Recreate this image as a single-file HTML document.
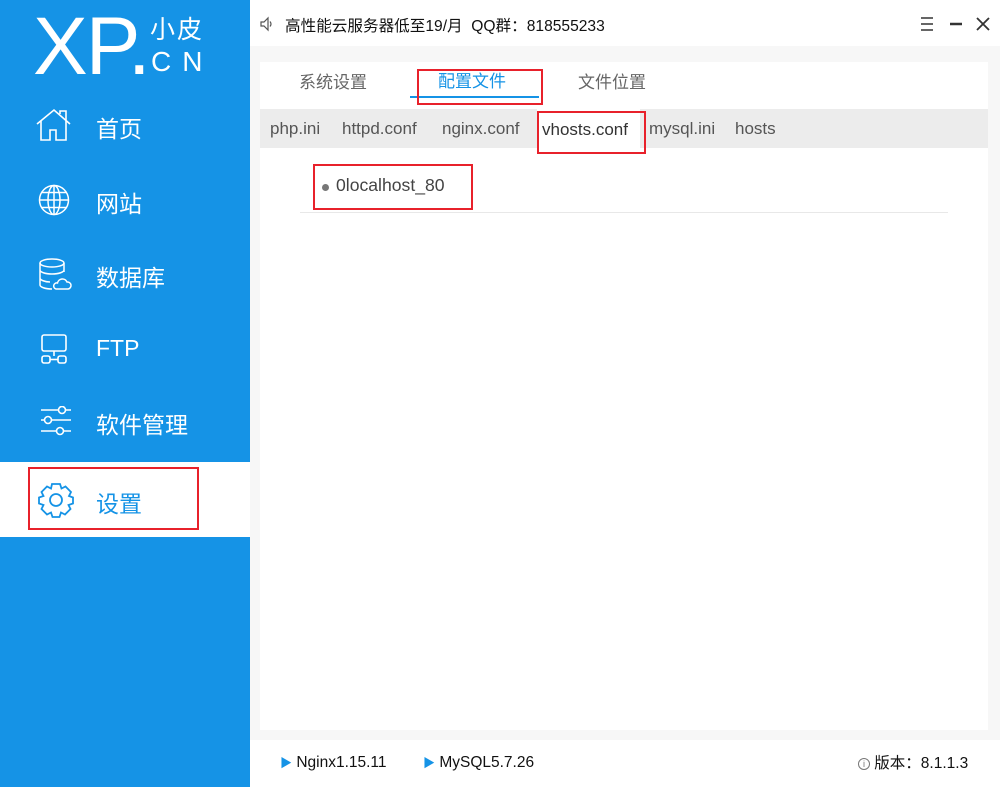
<!DOCTYPE html>
<html><head><meta charset="utf-8"><style>
*{margin:0;padding:0;box-sizing:border-box}
body{width:1000px;height:787px;position:relative;overflow:hidden;font-family:"Liberation Sans","Noto Sans CJK SC",sans-serif;background:#fff}
.side{position:absolute;left:0;top:0;width:250px;height:787px;background:#1593e6;color:#fff}
.abs{position:absolute}
.nav{position:absolute;left:96px;font-size:23px;color:#fff}
.main{position:absolute;left:250px;top:46px;width:750px;height:694px;background:#f7f7f7}
.panel{position:absolute;left:260px;top:62px;width:728px;height:668px;background:#fff}
.red{position:absolute;border:2px solid #e8212b}
.st{position:absolute;top:57px;font-size:17px;color:#555}
</style></head><body>
<div class="side">
  <div class="abs" style="left:33px;top:6px;font-size:82px;line-height:82px;letter-spacing:-2px">XP<span>.</span></div>
  <div class="abs" style="left:150px;top:16px;font-size:25px;line-height:28px;letter-spacing:2px">小皮</div>
  <div class="abs" style="left:151px;top:48px;font-size:28px;line-height:28px;letter-spacing:11px">CN</div>
  <svg class="abs" style="left:36px;top:108px" width="36" height="34" viewBox="0 0 36 34" fill="none" stroke="#fff" stroke-width="1.6"><path d="M1 16 L18 2 L34 16"/><path d="M24 6 V3 H30 V12"/><path d="M5 13 V32 H14 V22 H20 V32 H30 V13"/></svg>
  <div class="nav" style="top:110px">首页</div>
  <svg class="abs" style="left:38px;top:184px" width="32" height="32" viewBox="0 0 32 32" fill="none" stroke="#fff" stroke-width="1.5"><circle cx="16" cy="16" r="14.5"/><ellipse cx="16" cy="16" rx="6" ry="14.5"/><path d="M16 1.5V30.5M1.5 16H30.5M4 8.5H28M4 23.5H28"/></svg>
  <div class="nav" style="top:185px">网站</div>
  <svg class="abs" style="left:38px;top:258px" width="34" height="34" viewBox="0 0 34 34" fill="none" stroke="#fff" stroke-width="1.5"><ellipse cx="14" cy="5" rx="12" ry="4"/><path d="M2 5V27c0 2 5 4 12 4M26 5V14M2 12c0 2 5 4 12 4s12-2 12-4M2 20c0 2 5 4 10 4"/><path d="M18 31h12a3.5 3.5 0 0 0-1-7 5 5 0 0 0-9.5 1A3 3 0 0 0 18 31z"/></svg>
  <div class="nav" style="top:259px">数据库</div>
  <svg class="abs" style="left:39px;top:333px" width="32" height="32" viewBox="0 0 32 32" fill="none" stroke="#fff" stroke-width="1.6"><rect x="3" y="2" width="24" height="16" rx="2"/><path d="M15 18V23"/><rect x="3" y="23" width="8" height="7" rx="2"/><rect x="19" y="23" width="8" height="7" rx="2"/><path d="M11 26.5H19"/></svg>
  <div class="nav" style="top:335px">FTP</div>
  <svg class="abs" style="left:40px;top:406px" width="32" height="32" viewBox="0 0 32 32" fill="none" stroke="#fff" stroke-width="1.6"><path d="M1 4H18M26 4H31M1 14H4M12 14H31M1 25H16M24 25H31"/><circle cx="22" cy="4" r="3.5"/><circle cx="8" cy="14" r="3.5"/><circle cx="20" cy="25" r="3.5"/></svg>
  <div class="nav" style="top:406px">软件管理</div>
  <div class="abs" style="left:0;top:462px;width:250px;height:75px;background:#fff"></div>
  <svg class="abs" style="left:38px;top:482px" width="36" height="36" viewBox="0 0 36 36" fill="none" stroke="#1593e6" stroke-width="1.8"><path d="M14 2h8l1.5 4.5 4-2 5.5 5.5-2 4L35 15.5v6L30.5 23l2 4-5.5 5.5-4-2L21.5 35h-7l-1.5-4.5-4 2L3.5 27l2-4L1 21.5v-6L5.5 14l-2-4L9 4.5l4 2z"/><circle cx="18" cy="18" r="6"/></svg>
  <div class="nav" style="top:485px;color:#1593e6">设置</div>
  <div class="red" style="left:28px;top:467px;width:171px;height:63px"></div>
</div>
<div class="abs" style="left:250px;top:0;width:750px;height:46px;background:#fff"></div>
<svg class="abs" style="left:259px;top:16px" width="16" height="16" viewBox="0 0 16 16" fill="none" stroke="#555" stroke-width="1.2"><path d="M2 6H5L9 2V14L5 10H2Z"/><path d="M11 5.5q2 2.5 0 5"/></svg>
<div class="abs" style="left:285px;top:14px;font-size:15.6px;color:#111">高性能云服务器低至19/月&nbsp; QQ群：818555233</div>
<svg class="abs" style="left:918px;top:15px" width="74" height="18" viewBox="0 0 74 18" fill="none" stroke="#333" stroke-width="1.5"><path d="M3 3H15M3 9H15M3 15H15"/><path d="M32 9H44" stroke-width="2.5"/><path d="M59 3L71 15M71 3L59 15" stroke-width="1.8"/></svg>
<div class="main"></div>
<div class="panel">
  <div class="abs" style="left:39px;top:6px;font-size:17px;color:#666">系统设置</div>
  <div class="abs" style="left:178px;top:5px;font-size:17px;color:#1593e6">配置文件</div>
  <div class="abs" style="left:150px;top:34px;width:129px;height:2px;background:#1593e6"></div>
  <div class="abs" style="left:318px;top:6px;font-size:17px;color:#666">文件位置</div>
  <div class="abs" style="left:0;top:47px;width:728px;height:39px;background:#ececec"></div>
  <div class="abs" style="left:277px;top:47px;width:103px;height:39px;background:#fff"></div>
  <div class="st" style="left:10px">php.ini</div>
  <div class="st" style="left:82px">httpd.conf</div>
  <div class="st" style="left:182px">nginx.conf</div>
  <div class="st" style="left:282px;top:58px;color:#333">vhosts.conf</div>
  <div class="st" style="left:389px">mysql.ini</div>
  <div class="st" style="left:475px">hosts</div>
  <div class="abs" style="left:62px;top:122px;width:7px;height:7px;border-radius:50%;background:#777"></div>
  <div class="abs" style="left:76px;top:113px;font-size:17.6px;color:#444">0localhost_80</div>
  <div class="abs" style="left:40px;top:150px;width:648px;height:1px;background:#e8e8e8"></div>
</div>
<div class="red" style="left:417px;top:69px;width:126px;height:36px"></div>
<div class="red" style="left:537px;top:111px;width:109px;height:43px"></div>
<div class="red" style="left:313px;top:164px;width:160px;height:46px"></div>
<div class="abs" style="left:250px;top:740px;width:750px;height:47px;background:#fff"></div>
<div class="abs" style="left:280px;top:754px;font-size:15.5px;color:#111"><span style="color:#1593e6;font-size:12px">▶</span> Nginx1.15.11</div>
<div class="abs" style="left:423px;top:754px;font-size:15.5px;color:#111"><span style="color:#1593e6;font-size:12px">▶</span> MySQL5.7.26</div>
<div class="abs" style="left:858px;top:751px;font-size:15.5px;color:#111"><span style="display:inline-block;width:12px;height:12px;border:1px solid #777;border-radius:50%;font-size:9px;line-height:10px;text-align:center;color:#777;vertical-align:1px">i</span> 版本：8.1.1.3</div>
</body></html>
